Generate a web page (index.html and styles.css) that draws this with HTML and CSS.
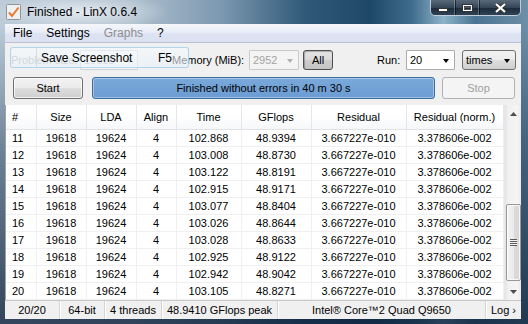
FILE: index.html
```html
<!DOCTYPE html>
<html>
<head>
<meta charset="utf-8">
<link rel="stylesheet" href="styles.css">
</head>
<body>
<div class="window">
  <div class="titlebar">
    <span class="app-icon">
      <svg width="15" height="16" viewBox="0 0 15 16">
        <rect x="0.5" y="0.5" width="14" height="15" rx="1" fill="#eef0f2" stroke="#8c949c"/>
        <path d="M3 8.5 L6 12 L12.5 3.5" fill="none" stroke="#e8792a" stroke-width="2"/>
      </svg>
    </span>
    <span class="title">Finished - LinX 0.6.4</span>
    <div class="caption">
      <span class="cbtn cmin"><svg width="10" height="4" viewBox="0 0 10 4"><rect x="0.5" y="0.5" width="9" height="3" fill="#fff" stroke="#333"/></svg></span>
      <span class="cbtn cmax"><svg width="11" height="8" viewBox="0 0 11 8"><rect x="0.5" y="0.5" width="10" height="7" fill="none" stroke="#333"/><rect x="1.5" y="1.5" width="8" height="5" fill="none" stroke="#fff"/><rect x="2.5" y="3.5" width="6" height="2" fill="none" stroke="#555"/></svg></span>
      <span class="cbtn cclose"><svg width="13" height="10" viewBox="0 0 13 10"><path d="M2 1 L11 9 M11 1 L2 9" stroke="#333" stroke-width="4"/><path d="M2 1 L11 9 M11 1 L2 9" stroke="#fff" stroke-width="2.2"/></svg></span>
    </div>
  </div>
  <div class="client">
    <div class="menubar">
      <span class="mi">File</span>
      <span class="mi">Settings</span>
      <span class="mi mi-off">Graphs</span>
      <span class="mi">?</span>
    </div>
    <div class="toolbar">
      <span class="lbl lbl-size">Problem size:</span>
      <div class="combo combo-size"><span class="cval">19618</span><i class="arrow"></i></div>
      <span class="lbl lbl-mem">Memory (MiB):</span>
      <div class="combo combo-mem"><span class="cval">2952</span><i class="arrow"></i></div>
      <div class="btn btn-all">All</div>
      <span class="lbl lbl-run">Run:</span>
      <div class="combo combo-run"><span class="cval">20</span><i class="arrow"></i></div>
      <div class="combo combo-times"><span class="cval">times</span><i class="arrow"></i></div>
    </div>
    <div class="actions">
      <div class="btn btn-start">Start</div>
      <div class="progress">Finished without errors in 40 m 30 s</div>
      <div class="btn btn-stop">Stop</div>
    </div>
    <div class="results">
      <div class="grid-wrap">
        <table class="grid">
          <colgroup>
            <col class="c1"><col class="c2"><col class="c3"><col class="c4"><col class="c5"><col class="c6"><col class="c7"><col class="c8">
          </colgroup>
          <thead>
            <tr><th class="left">#</th><th>Size</th><th>LDA</th><th>Align</th><th>Time</th><th>GFlops</th><th>Residual</th><th>Residual (norm.)</th></tr>
          </thead>
          <tbody>
            <tr><td class="left">11</td><td>19618</td><td>19624</td><td>4</td><td>102.868</td><td>48.9394</td><td>3.667227e-010</td><td>3.378606e-002</td></tr>
            <tr><td class="left">12</td><td>19618</td><td>19624</td><td>4</td><td>103.008</td><td>48.8730</td><td>3.667227e-010</td><td>3.378606e-002</td></tr>
            <tr><td class="left">13</td><td>19618</td><td>19624</td><td>4</td><td>103.122</td><td>48.8191</td><td>3.667227e-010</td><td>3.378606e-002</td></tr>
            <tr><td class="left">14</td><td>19618</td><td>19624</td><td>4</td><td>102.915</td><td>48.9171</td><td>3.667227e-010</td><td>3.378606e-002</td></tr>
            <tr><td class="left">15</td><td>19618</td><td>19624</td><td>4</td><td>103.077</td><td>48.8404</td><td>3.667227e-010</td><td>3.378606e-002</td></tr>
            <tr><td class="left">16</td><td>19618</td><td>19624</td><td>4</td><td>103.026</td><td>48.8644</td><td>3.667227e-010</td><td>3.378606e-002</td></tr>
            <tr><td class="left">17</td><td>19618</td><td>19624</td><td>4</td><td>103.028</td><td>48.8633</td><td>3.667227e-010</td><td>3.378606e-002</td></tr>
            <tr><td class="left">18</td><td>19618</td><td>19624</td><td>4</td><td>102.925</td><td>48.9122</td><td>3.667227e-010</td><td>3.378606e-002</td></tr>
            <tr><td class="left">19</td><td>19618</td><td>19624</td><td>4</td><td>102.942</td><td>48.9042</td><td>3.667227e-010</td><td>3.378606e-002</td></tr>
            <tr><td class="left">20</td><td>19618</td><td>19624</td><td>4</td><td>103.105</td><td>48.8271</td><td>3.667227e-010</td><td>3.378606e-002</td></tr>
          </tbody>
        </table>
      </div>
      <div class="vscroll">
        <div class="sb-btn"><svg width="7" height="4" viewBox="0 0 7 4"><path d="M0 4 L3.5 0 L7 4 Z" fill="#4d4d4d"/></svg></div>
        <div class="sb-track">
          <div class="sb-thumb"><span class="grip"></span></div>
        </div>
        <div class="sb-btn"><svg width="7" height="4" viewBox="0 0 7 4"><path d="M0 0 L3.5 4 L7 0 Z" fill="#4d4d4d"/></svg></div>
      </div>
    </div>
    <div class="statusbar">
      <span class="sc sc1">20/20</span>
      <span class="sc sc2">64-bit</span>
      <span class="sc sc3">4 threads</span>
      <span class="sc sc4">48.9410 GFlops peak</span>
      <span class="sc sc5">Intel® Core™2 Quad Q9650</span>
      <span class="sc sc6">Log ›</span>
    </div>
    <div class="popup">
      <span class="pop-icon"></span>
      <span class="pop-text">Save Screenshot</span>
      <span class="pop-key">F5</span>
    </div>
  </div>
</div>
</body>
</html>
```

FILE: styles.css
```css
* { box-sizing: border-box; }
html, body { margin: 0; padding: 0; }
body {
  width: 528px;
  height: 324px;
  overflow: hidden;
  font-family: "Liberation Sans", Arial, sans-serif;
  font-size: 11px;
  color: #000;
}
.window {
  position: relative;
  width: 528px;
  height: 324px;
  display: flex;
  flex-direction: column;
  padding: 0 7px 5px 5px;
  background:
    radial-gradient(ellipse 90px 18px at 80px 12px, rgba(235,240,245,0.85), rgba(235,240,245,0) 100%),
    linear-gradient(to bottom, rgba(0,0,0,0) 0, rgba(0,0,0,0) 26px, rgba(20,45,75,0.45) 45%, rgba(15,35,60,0.8) 100%),
    linear-gradient(to right, #bccbd8 0%, #aebfcd 25%, #7c98b0 42%, #2f5878 58%, #1f4868 70%, #3f6c8c 78%, #8db3c9 84%, #4b7593 90%, #6e8fa6 100%);
}
.titlebar {
  height: 24px;
  display: flex;
  align-items: flex-start;
  flex-shrink: 0;
}
.app-icon {
  margin: 4px 0 0 1px;
  width: 15px;
  height: 16px;
  display: block;
}
.app-icon svg { display: block; }
.title {
  margin-left: 6px;
  font-size: 12px;
  line-height: 24px;
  color: #000;
}
.caption {
  margin-left: auto;
  display: flex;
  height: 16px;
  width: 91px;
  border: 1px solid rgba(215,225,235,0.85);
  border-top: none;
  border-radius: 0 0 5px 5px;
  overflow: hidden;
  background: linear-gradient(to bottom, #58697a 0%, #334657 50%, #1c2c3b 55%, #2e4356 100%);
}
.cbtn {
  display: flex;
  align-items: center;
  justify-content: center;
  height: 15px;
  border-right: 1px solid rgba(0,0,0,0.55);
  box-shadow: inset -1px 0 0 rgba(255,255,255,0.25);
}
.cbtn svg { display: block; }
.cmin { width: 25px; align-items: flex-end; padding-bottom: 3px; }
.cmax { width: 24px; }
.cclose { flex: 1; border-right: none; box-shadow: none; }

.client {
  position: relative;
  flex: 1;
  display: flex;
  flex-direction: column;
  background: #f0f0f0;
  overflow: hidden;
}
.menubar {
  height: 19px;
  flex-shrink: 0;
  display: flex;
  align-items: center;
  padding-left: 1px;
  font-size: 12px;
  background: linear-gradient(to bottom, #f5f7fc 0%, #e9edf8 45%, #dde3f3 55%, #dbe1f1 100%);
  border-bottom: 1px solid #b8bfd2;
}
.mi { padding: 0 7px; line-height: 18px; }
.mi-off { color: #8d8d8d; }

.toolbar {
  margin-top: 7px;
  height: 20px;
  flex-shrink: 0;
  display: flex;
  align-items: center;
}
.lbl { white-space: nowrap; line-height: 20px; }
.lbl-size { margin-left: 6px; width: 69px; color: #a8a8a8; }
.lbl-mem { margin-left: 34px; width: 77px; }
.lbl-run { margin-left: 44px; width: 29px; }

.combo {
  position: relative;
  height: 20px;
  display: flex;
  align-items: center;
  border: 1px solid #abadb3;
  background: #fff;
  border-radius: 1px;
}
.cval { padding-left: 3px; line-height: 18px; }
.arrow {
  position: absolute;
  right: 5px;
  top: 8px;
  width: 0;
  height: 0;
  border-left: 3.5px solid transparent;
  border-right: 3.5px solid transparent;
  border-top: 4px solid #000;
}
.combo-size { width: 58px; border-color: #cfd2d6; background: #f8f8f8; }
.combo-size .cval { color: #b5b5b5; }
.combo-size .arrow { border-top-color: #c0c0c0; }
.combo-mem { width: 50px; border-color: #c9cacc; background: #f4f4f4; }
.combo-mem .cval { color: #a3a3a3; }
.combo-mem .arrow { border-top-color: #b0b0b0; }
.combo-run { width: 49px; }
.combo-times {
  margin-left: 7px;
  width: 54px;
  border-color: #707070;
  border-radius: 3px;
  background: linear-gradient(to bottom, #f2f2f2 0%, #ebebeb 50%, #dddddd 51%, #cfcfcf 100%);
}

.btn {
  display: flex;
  align-items: center;
  justify-content: center;
  border: 1px solid #707070;
  border-radius: 3px;
  background: linear-gradient(to bottom, #f2f2f2 0%, #ebebeb 50%, #dddddd 51%, #cfcfcf 100%);
  box-shadow: inset 0 0 0 1px rgba(255,255,255,0.7);
  color: #000;
}
.btn-all {
  margin-left: 4px;
  width: 30px;
  height: 20px;
  border-color: #4e4e4e;
  background: linear-gradient(to bottom, #e5e5e5 0%, #dadada 50%, #cdcdcd 51%, #c4c4c4 100%);
  box-shadow: inset 1px 1px 1px rgba(0,0,0,0.25);
}

.actions {
  margin-top: 7px;
  height: 22px;
  flex-shrink: 0;
  display: flex;
  align-items: stretch;
}
.btn-start { margin-left: 8px; width: 70px; }
.progress {
  margin-left: 9px;
  width: 343px;
  display: flex;
  align-items: center;
  justify-content: center;
  border: 1px solid #3c6ea0;
  border-radius: 3px;
  background: linear-gradient(to bottom, #7aa8da 0%, #6b9cd2 100%);
  box-shadow: inset 0 0 0 1px rgba(255,255,255,0.35);
  color: #000;
}
.btn-stop {
  margin-left: 7px;
  width: 73px;
  border-color: #adb2b5;
  background: #f4f4f4;
  box-shadow: none;
  color: #a0a0a0;
}

.results {
  margin-top: 6px;
  flex: 1;
  min-height: 0;
  display: flex;
  background: #fff;
  border-left: 1px solid #9aa2aa;
  overflow: hidden;
}
.grid-wrap { width: 498px; overflow: hidden; }
.grid {
  width: 497px;
  table-layout: fixed;
  border-collapse: collapse;
  font-size: 11px;
}
.c1 { width: 30px; }
.c2 { width: 50px; }
.c3 { width: 50px; }
.c4 { width: 40px; }
.c5 { width: 65px; }
.c6 { width: 70px; }
.c7 { width: 95px; }
.c8 { width: 97px; }
.grid th {
  height: 24px;
  padding: 0;
  font-weight: normal;
  text-align: center;
  background: linear-gradient(to bottom, #ffffff 0%, #ffffff 40%, #f6f7f9 100%);
  border-right: 1px solid #e3e6ea;
  border-bottom: 1px solid #dfe2e6;
  white-space: nowrap;
}
.grid td {
  height: 17px;
  padding: 0;
  text-align: center;
  border-right: 1px solid #f0f0f0;
  border-bottom: 1px solid #f0f0f0;
  white-space: nowrap;
}
.grid .left { text-align: left; padding-left: 6px; }

.vscroll {
  width: 17px;
  display: flex;
  flex-direction: column;
  background: linear-gradient(to right, #e3e3e3 0%, #f1f1f1 20%, #f5f5f5 80%, #e8e8e8 100%);
  border-left: 1px solid #e8e8e8;
}
.sb-btn {
  height: 17px;
  display: flex;
  align-items: center;
  justify-content: center;
  flex-shrink: 0;
}
.sb-btn svg { display: block; }
.sb-track {
  flex: 1;
  display: flex;
  flex-direction: column;
  justify-content: flex-end;
  padding: 0 0 2px 1px;
}
.sb-thumb {
  height: 77px;
  width: 15px;
  border: 1px solid #979797;
  border-radius: 2px;
  background: linear-gradient(to right, #f3f3f3 0%, #eaeaea 50%, #dcdcdc 51%, #d6d6d6 100%);
  box-shadow: inset 0 0 0 1px rgba(255,255,255,0.8);
  display: flex;
  align-items: center;
  justify-content: center;
}
.grip {
  display: block;
  width: 7px;
  height: 7px;
  background: repeating-linear-gradient(to bottom, #5a5a5a 0, #5a5a5a 1px, #f4f4f4 1px, #f4f4f4 2px);
}

.statusbar {
  height: 19px;
  flex-shrink: 0;
  display: flex;
  align-items: stretch;
  background: #f0f0f0;
  border-top: 1px solid #c8c8c8;
}
.sc {
  display: flex;
  align-items: center;
  justify-content: center;
  white-space: nowrap;
  border-right: 1px solid #d5d5d5;
  box-shadow: 1px 0 0 #fff;
}
.sc1 { width: 55px; }
.sc2 { width: 45px; }
.sc3 { width: 57px; }
.sc4 { width: 116px; }
.sc5 { width: 208px; }
.sc6 { flex: 1; border-right: none; box-shadow: none; }

.popup {
  position: absolute;
  left: 5px;
  top: 23px;
  width: 179px;
  height: 21px;
  display: flex;
  align-items: center;
  border: 1px solid rgba(160,205,232,0.8);
  border-radius: 3px;
  background: linear-gradient(to bottom, rgba(246,250,254,0.6), rgba(232,242,251,0.6));
  font-size: 12px;
}
.pop-icon {
  width: 26px;
  height: 100%;
  border-right: 1px solid rgba(200,215,228,0.8);
}
.pop-text { margin-left: 4px; }
.pop-key { margin-left: auto; margin-right: 16px; }
```
